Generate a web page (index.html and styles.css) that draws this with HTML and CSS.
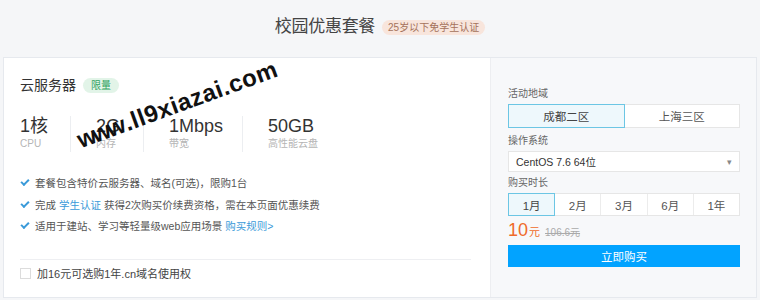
FILE: index.html
```html
<!DOCTYPE html>
<html lang="zh">
<head>
<meta charset="utf-8">
<link rel="stylesheet" href="styles.css">
</head>
<body>
<div class="page">
  <header class="head">
    <h1 class="title">校园优惠套餐</h1>
    <span class="tag">25岁以下免学生认证</span>
  </header>
  <section class="card">
    <div class="left">
      <div class="prod">
        <span class="prod-name">云服务器</span>
        <span class="limit">限量</span>
      </div>
      <div class="specs">
        <div class="spec s1"><div class="val">1核</div><div class="lab">CPU</div></div>
        <div class="spec s2"><div class="val">2G</div><div class="lab">内存</div></div>
        <div class="spec s3"><div class="val">1Mbps</div><div class="lab">带宽</div></div>
        <div class="spec s4"><div class="val">50GB</div><div class="lab">高性能云盘</div></div>
      </div>
      <ul class="checks">
        <li><span class="tick"></span>套餐包含特价云服务器、域名(可选)，限购1台</li>
        <li><span class="tick"></span>完成 <a class="link">学生认证</a> 获得2次购买价续费资格，需在本页面优惠续费</li>
        <li><span class="tick"></span>适用于建站、学习等轻量级web应用场景 <a class="link">购买规则&gt;</a></li>
      </ul>
      <div class="addon">
        <span class="box"></span>
        <span>加16元可选购1年.cn域名使用权</span>
      </div>
    </div>
    <div class="right">
      <div class="label">活动地域</div>
      <div class="seg seg2">
        <div class="opt on">成都二区</div>
        <div class="opt">上海三区</div>
      </div>
      <div class="label">操作系统</div>
      <div class="select"><span>CentOS 7.6 64位</span><span class="arrow">▾</span></div>
      <div class="label">购买时长</div>
      <div class="seg seg5">
        <div class="opt on">1月</div>
        <div class="opt">2月</div>
        <div class="opt">3月</div>
        <div class="opt">6月</div>
        <div class="opt">1年</div>
      </div>
      <div class="price"><span class="now">10</span><span class="unit">元</span><span class="old">106.6元</span></div>
      <div class="buy">立即购买</div>
    </div>
    <div class="watermark"><span class="wm-w">www</span>.ll9xiazai.com</div>
  </section>
</div>
</body>
</html>
```

FILE: styles.css
```css
* { box-sizing: border-box; margin: 0; padding: 0; }
html, body { width: 760px; height: 300px; overflow: hidden; }
body {
  background: #f5f6f8;
  font-family: "Liberation Sans", "Noto Sans CJK SC", sans-serif;
  color: #333;
}
.page { padding: 0 3px; }
.head {
  height: 57px;
  display: flex;
  align-items: center;
  justify-content: center;
  gap: 7px;
  padding-bottom: 3px;
}
.title {
  font-size: 17px;
  font-weight: normal;
  color: #444;
  line-height: 20px;
  letter-spacing: -0.3px;
}
.tag {
  font-size: 10px;
  line-height: 15px;
  height: 15px;
  padding: 0 6px;
  border-radius: 8px;
  background: #f8e5dc;
  color: #a5725b;
}
.card {
  position: relative;
  height: 241px;
  border: 1px solid #e6e9ee;
  display: flex;
  background: #fff;
}
.left {
  width: 486px;
  padding: 19px 16px 0 16px;
  display: flex;
  flex-direction: column;
}
.prod { display: flex; align-items: center; gap: 7px; height: 16px; }
.prod-name { font-size: 14px; color: #333; line-height: 16px; }
.limit {
  font-size: 10px;
  line-height: 15px;
  height: 15px;
  padding: 0 8px;
  border-radius: 8px;
  background: #e2f4e8;
  color: #2ea35d;
}
.specs {
  display: grid;
  grid-template-columns: 50px 73px 99px auto;
  margin-top: 23px;
  height: 36px;
}
.spec { padding-left: 25px; border-left: 1px solid #eceef1; }
.spec.s1 { padding-left: 0; border-left: none; }
.val { font-size: 18px; line-height: 21px; color: #333; }
.lab { font-size: 10px; line-height: 14px; color: #b5b5b5; }
.checks {
  list-style: none;
  margin-top: 24px;
  display: flex;
  flex-direction: column;
  gap: 7px;
}
.checks li {
  font-size: 10.5px;
  line-height: 14.5px;
  color: #555;
  display: flex;
  align-items: center;
  white-space: nowrap;
}
.tick {
  width: 8px; height: 5px;
  border-left: 2px solid #3a9ad9;
  border-bottom: 2px solid #3a9ad9;
  transform: rotate(-45deg);
  margin: -3px 6px 0 1px;
}
.link { color: #3a9ad9; text-decoration: none; margin: 0 3px; }
.addon {
  margin-top: 25px;
  border-top: 1px solid #eeeff2;
  padding-top: 7px;
  display: flex;
  align-items: center;
  gap: 6px;
  font-size: 11px;
  line-height: 14px;
  color: #444;
  margin-right: 3px;
}
.box {
  width: 11px; height: 11px;
  border: 1px solid #dcdcdc;
  background: #fff;
}
.right {
  flex: 1;
  background: #f7f8fa;
  border-left: 1px solid #edeef1;
  padding: 29px 16px 0 17px;
  display: flex;
  flex-direction: column;
}
.label { font-size: 10px; line-height: 14px; color: #666; margin-bottom: 3px; }
.seg {
  display: flex;
  background: #fff;
  border: 1px solid #e6e6e6;
  margin-bottom: 6px;
}
.seg2 { height: 24px; }
.seg5 { height: 23px; margin-bottom: 4px; }
.opt {
  flex: 1;
  display: flex;
  align-items: center;
  justify-content: center;
  font-size: 11.5px;
  color: #555;
  border-left: 1px solid #ececec;
}
.opt:first-child { border-left: none; }
.opt.on {
  background: #eef8fc;
  outline: 1px solid #6cc6e4;
  color: #444;
  position: relative;
}
.select {
  height: 21px;
  background: #fff;
  border: 1px solid #e6e6e6;
  display: flex;
  align-items: center;
  justify-content: space-between;
  padding: 0 7px 0 7px;
  font-size: 10.5px;
  color: #333;
  margin-bottom: 4px;
}
.arrow { font-size: 9px; color: #888; }
.price { display: flex; align-items: baseline; height: 20px; }
.now { font-size: 18px; color: #ef6b2a; line-height: 20px; }
.unit { font-size: 11px; color: #ef6b2a; margin-left: 1px; }
.old { font-size: 10px; color: #aaa; text-decoration: line-through; margin-left: 5px; }
.buy {
  margin-top: 5px;
  height: 22px;
  background: #02a3ff;
  color: #fff;
  font-size: 11.5px;
  display: flex;
  align-items: center;
  justify-content: center;
}
.watermark {
  position: absolute;
  left: 78px;
  top: 70px;
  font-family: "Liberation Sans", sans-serif;
  font-weight: bold;
  font-size: 24px;
  line-height: 24px;
  color: #111;
  transform: rotate(-20deg);
  transform-origin: left bottom;
  white-space: nowrap;
  letter-spacing: 0.5px;
}
.wm-w { letter-spacing: -3px; margin-right: 3px; }
```
